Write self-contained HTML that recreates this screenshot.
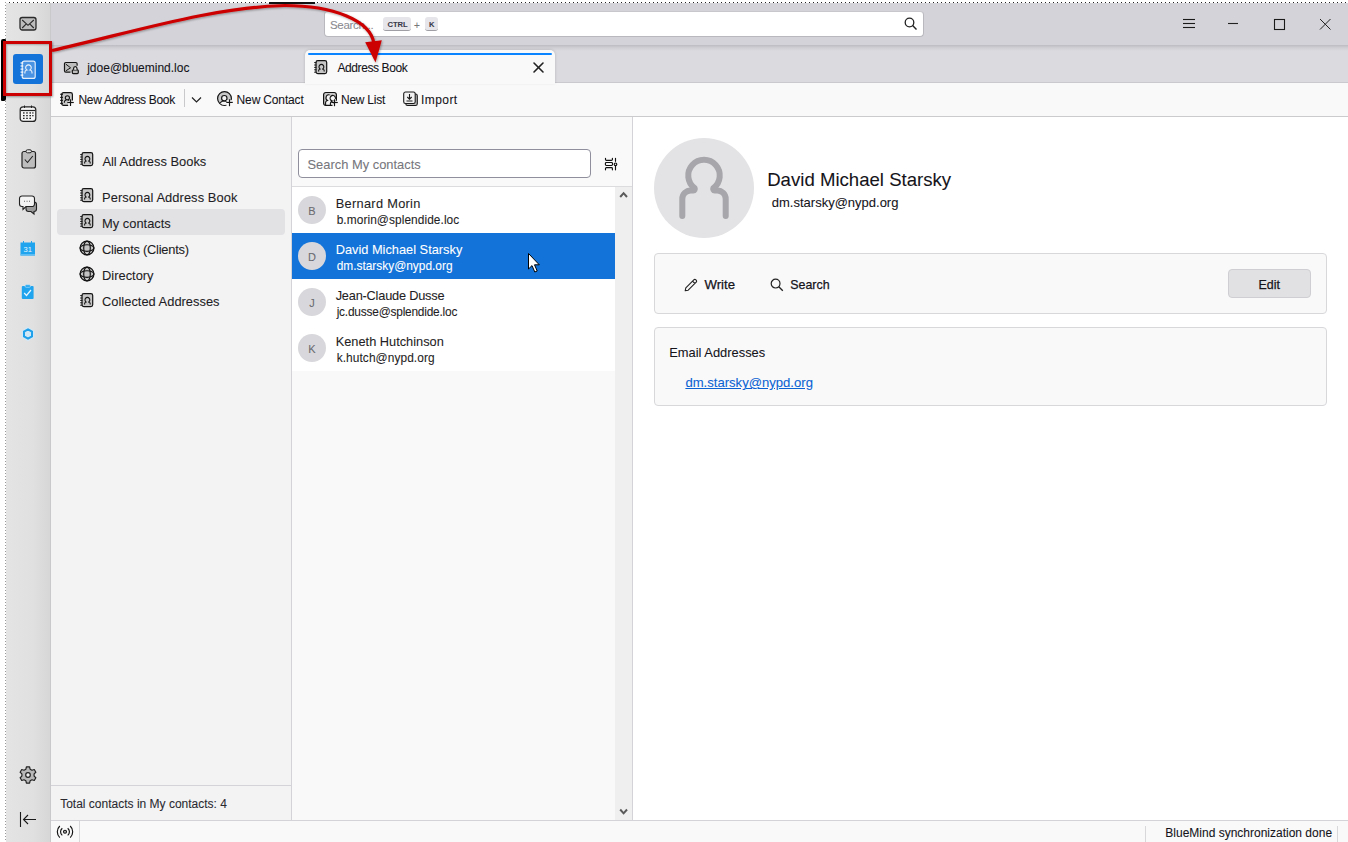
<!DOCTYPE html>
<html><head><meta charset="utf-8">
<style>
*{box-sizing:border-box;margin:0;padding:0}
html,body{width:1348px;height:842px;overflow:hidden;background:#fff;font-family:"Liberation Sans",sans-serif;color:#15141a}
.abs{position:absolute}
.t{position:absolute;white-space:nowrap;line-height:1;-webkit-text-stroke:0.08px currentColor}
svg{position:absolute;overflow:visible}
</style></head><body>
<svg width="0" height="0" style="position:absolute"><defs>
<symbol id="ab" viewBox="0 0 16 16"><rect x="3" y="0.7" width="10.7" height="12.9" rx="1.8" fill="#c6c6c6" stroke="#141414" stroke-width="1.2"/><g stroke="#141414" stroke-width="1"><line x1="1.2" y1="2.6" x2="3.4" y2="2.6"/><line x1="1.2" y1="5" x2="3.4" y2="5"/><line x1="1.2" y1="7.4" x2="3.4" y2="7.4"/><line x1="1.2" y1="9.8" x2="3.4" y2="9.8"/><line x1="1.2" y1="12.2" x2="3.4" y2="12.2"/></g><path d="M5.6,11.6 V10.7 a1.5,1.5 0 0 1 1.5,-1.5 h0.4 A2.4,2.5 0 1 1 9.3,9.2 h0.4 a1.5,1.5 0 0 1 1.5,1.5 V11.6" fill="none" stroke="#141414" stroke-width="1.1"/></symbol>
<symbol id="globe" viewBox="0 0 16 16"><circle cx="8" cy="8" r="6.9" fill="#c4c4c4" stroke="#141414" stroke-width="1.3"/><ellipse cx="8" cy="8" rx="3.3" ry="6.9" fill="none" stroke="#141414" stroke-width="1.15"/><ellipse cx="8" cy="8" rx="6.9" ry="3.3" fill="none" stroke="#141414" stroke-width="1.15"/></symbol>
</defs></svg>
<!-- dotted border -->
<div class="abs" style="left:5px;top:2px;width:1343px;height:1px;background:repeating-linear-gradient(90deg,#222 0 1px,transparent 1px 4px)"></div>
<div class="abs" style="left:5px;top:2px;width:1px;height:840px;background:repeating-linear-gradient(180deg,#9a9a9a 0 1px,transparent 1px 3px)"></div>

<!-- spaces sidebar -->
<div class="abs" style="left:6px;top:3px;width:45px;height:839px;background:linear-gradient(90deg,#e4e4e4 0%,#e0e0e0 60%,#d6d6d6 100%)"></div>
<div class="abs" style="left:50px;top:3px;width:1px;height:839px;background:#c9c9cc"></div>

<!-- title bar -->
<div class="abs" style="left:51px;top:3px;width:1297px;height:43px;background:#d4d3d9"></div>

<!-- search box -->
<div class="abs" style="left:324px;top:11px;width:600px;height:26px;background:#fff;border:1px solid #b9b8be;border-radius:4px;border-top-color:#c8c7cc"></div>
<div class="t" style="left:330px;top:20.00px;font-size:11.5px;color:#8b8a90;letter-spacing:-0.3px">Search...</div>
<div class="abs" style="left:383px;top:17px;width:28px;height:14px;background:#e6e6ea;border-radius:3px;border-bottom:1.5px solid #9e9ea4"></div>
<div class="t" style="left:387.5px;top:21.3px;font-size:7.6px;font-weight:bold;color:#3a3a4a">CTRL</div>
<div class="t" style="left:414px;top:20.70px;font-size:10px;color:#777">+</div>
<div class="abs" style="left:425px;top:17px;width:13px;height:14px;background:#e6e6ea;border-radius:3px;border-bottom:1.5px solid #9e9ea4"></div>
<div class="t" style="left:429px;top:21.3px;font-size:7.6px;font-weight:bold;color:#3a3a4a">K</div>
<svg width="14" height="14" style="left:904px;top:17px"><circle cx="5.5" cy="5.5" r="4.3" fill="none" stroke="#222" stroke-width="1.3"/><line x1="8.6" y1="8.6" x2="12.5" y2="12.5" stroke="#222" stroke-width="1.4"/></svg>
<!-- window controls -->
<svg width="14" height="12" style="left:1183px;top:18px"><g stroke="#1a1a1a" stroke-width="1.1"><line x1="0" y1="1.5" x2="12" y2="1.5"/><line x1="0" y1="5.5" x2="12" y2="5.5"/><line x1="0" y1="9.5" x2="12" y2="9.5"/></g></svg>
<svg width="12" height="4" style="left:1228px;top:22px"><line x1="0" y1="1.5" x2="10" y2="1.5" stroke="#222" stroke-width="1.1"/></svg>
<svg width="12" height="12" style="left:1274px;top:19px"><rect x="0.5" y="0.5" width="10" height="10" fill="none" stroke="#1a1a1a" stroke-width="1.1"/></svg>
<svg width="12" height="12" style="left:1319.5px;top:19px"><g stroke="#222" stroke-width="1"><line x1="0" y1="0" x2="10.5" y2="10.5"/><line x1="10.5" y1="0" x2="0" y2="10.5"/></g></svg>

<!-- tab strip -->
<div class="abs" style="left:51px;top:46px;width:1297px;height:36px;background:#dadadf"></div>
<div class="abs" style="left:51px;top:45px;width:1297px;height:6px;background:linear-gradient(180deg,#bdbcc2,#d0d0d5 50%,#dadadf)"></div>

<!-- toolbar -->
<div class="abs" style="left:51px;top:82px;width:1297px;height:34px;background:#f9f9f9;border-top:1px solid #c9c9ce"></div>
<div class="abs" style="left:51px;top:116px;width:1297px;height:1px;background:#cbcbcd"></div>

<!-- toolbar content -->
<svg width="16" height="16" style="left:60px;top:91px"><rect x="1.7" y="1.6" width="10.7" height="12.8" rx="1.8" fill="#c8c8c8"/><path d="M8.6,14.4 H3.5 a1.8,1.8 0 0 1 -1.8,-1.8 V3.4 a1.8,1.8 0 0 1 1.8,-1.8 H10.6 a1.8,1.8 0 0 1 1.8,1.8 V9.6" fill="none" stroke="#141414" stroke-width="1.2"/><rect x="8" y="10.3" width="6" height="4.5" fill="#f9f9f9" opacity="0.85"/><g stroke="#141414" stroke-width="1.15"><line x1="0.2" y1="3.3" x2="2.9" y2="3.3"/><line x1="0.2" y1="6.4" x2="2.9" y2="6.4"/><line x1="0.2" y1="9.4" x2="2.9" y2="9.4"/><line x1="0.2" y1="12.4" x2="2.9" y2="12.4"/></g><circle cx="7.4" cy="6.8" r="2.1" fill="none" stroke="#141414" stroke-width="1.1"/><path d="M4.4,11.8 V11 a1.8,1.8 0 0 1 1.8,-1.8 M8.6,9.2 V10" fill="none" stroke="#141414" stroke-width="1.1"/><g stroke="#141414" stroke-width="1.15"><line x1="7.3" y1="11.5" x2="13.8" y2="11.5"/><line x1="10.5" y1="8.3" x2="10.5" y2="15"/></g></svg>
<div class="t" style="left:78.5px;top:93.8px;font-size:12px;letter-spacing:-0.31px">New Address Book</div>
<div class="abs" style="left:184px;top:89px;width:1px;height:18px;background:#c9c9cc"></div>
<svg width="12" height="8" style="left:190.5px;top:95.5px"><path d="M1,1.5 L5.5,6 L10,1.5" fill="none" stroke="#222" stroke-width="1.2"/></svg>
<svg width="18" height="17" style="left:216px;top:90px"><defs><clipPath id="ncclip"><circle cx="8.5" cy="8.5" r="6.4"/></clipPath></defs><circle cx="8.5" cy="8.5" r="6.9" fill="#c8c8c8" stroke="#141414" stroke-width="1.2"/><g clip-path="url(#ncclip)"><ellipse cx="8.3" cy="15.6" rx="5.2" ry="4.6" fill="#f4f4f4" stroke="#141414" stroke-width="1.1"/></g><circle cx="8.3" cy="8.2" r="2.7" fill="#f4f4f4" stroke="#141414" stroke-width="1.15"/><path d="M10.5,10.2 H17.5 V17 H10.5 Z" fill="#f9f9f9"/><g stroke="#141414" stroke-width="1.15"><line x1="10.3" y1="12.4" x2="16.8" y2="12.4"/><line x1="13.5" y1="9.3" x2="13.5" y2="16.2"/></g></svg>
<div class="t" style="left:236.6px;top:93.8px;font-size:12px;letter-spacing:-0.15px">New Contact</div>
<svg width="17" height="17" style="left:322px;top:91px"><rect x="1.6" y="1.5" width="12.8" height="12.9" rx="2.2" fill="#c8c8c8"/><path d="M3.6,14.4 V11.6 a2,2 0 0 1 1.2,-1.8 L5.6,9.4 A2.4,2.7 0 1 1 8.2,9 L8.6,9.6 V14.4 Z" fill="#f6f6f6"/><path d="M8.4,14.4 V12.2 a2,2 0 0 1 1.2,-1.8 L10.4,10 A2.7,2.8 0 1 1 13,10 L13.6,10.4 V14.4 Z" fill="#f6f6f6"/><path d="M10.6,14.4 H3.8 a2.2,2.2 0 0 1 -2.2,-2.2 V3.7 a2.2,2.2 0 0 1 2.2,-2.2 H12.2 a2.2,2.2 0 0 1 2.2,2.2 V9.8" fill="none" stroke="#141414" stroke-width="1.2"/><path d="M3.6,14.2 V11.6 a2,2 0 0 1 1.2,-1.8 L5.6,9.4 A2.4,2.7 0 1 1 7.6,4" fill="none" stroke="#141414" stroke-width="1.1"/><path d="M8.4,14.2 V12.2 a2,2 0 0 1 1.2,-1.8 L10.4,10 A2.7,2.8 0 1 1 13.4,7.8" fill="none" stroke="#141414" stroke-width="1.1"/><path d="M10.8,10.6 H17 V17 H10.8 Z" fill="#f9f9f9"/><path d="M11.2,11.8 H12.6" stroke="#141414" stroke-width="1"/><g stroke="#141414" stroke-width="1.15"><line x1="9.3" y1="11.5" x2="15.8" y2="11.5"/><line x1="12.5" y1="8.3" x2="12.5" y2="15.2"/></g></svg>
<div class="t" style="left:341px;top:93.8px;font-size:12px;letter-spacing:-0.25px">New List</div>
<svg width="16" height="16" style="left:403px;top:91px"><rect x="2.8" y="3" width="11.5" height="11.5" rx="1.8" fill="#bdbdbd" stroke="#1a1a1a" stroke-width="1.1"/><rect x="0.7" y="1" width="11.5" height="11.5" rx="1.8" fill="#f2f2f2" stroke="#1a1a1a" stroke-width="1.1"/><path d="M6.5,3 V8 M4.3,6 L6.5,8.2 L8.7,6 M3.5,10 H9.5" fill="none" stroke="#1a1a1a" stroke-width="1.1"/></svg>
<div class="t" style="left:421px;top:93.8px;font-size:12px;letter-spacing:0.43px">Import</div>

<!-- tab 1 -->
<svg width="18" height="14" style="left:63px;top:61px"><g transform="translate(0.3,0.4)"><path d="M1.5,1.5 H13.2 V5.5 L9,8 V10.4 H1.5 Z" fill="#bdbdbd"/><g fill="none" stroke="#161616" stroke-width="1.2"><path d="M7.2,10.7 H2.5 a1.3,1.3 0 0 1 -1.3,-1.3 V2.4 a1.3,1.3 0 0 1 1.3,-1.3 H12.5 a1.3,1.3 0 0 1 1.3,1.3 V4.3"/><path d="M2.6,2.8 L7.3,6.4 L2.6,9.4" stroke-width="1"/></g><rect x="9" y="8.4" width="6" height="3.8" rx="1" fill="#bdbdbd" stroke="#161616" stroke-width="1.2"/><path d="M10.3,8.4 V7.1 a1.7,1.9 0 0 1 3.4,0 V8.4" fill="#e8e8e8" stroke="#161616" stroke-width="1.2"/></g></svg>
<div class="t" style="left:87.2px;top:61.8px;font-size:12px;color:#15141a">jdoe@bluemind.loc</div>
<!-- tab 2 active -->
<div class="abs" style="left:305px;top:50px;width:250px;height:33px;background:#f9f9f9;border-radius:5px 5px 0 0;box-shadow:0 0 3px rgba(0,0,0,0.18)"></div>
<div class="abs" style="left:305px;top:78px;width:250px;height:6px;background:#f9f9f9"></div>
<div class="abs" style="left:308px;top:53px;width:244px;height:2px;background:#0b84ff;border-radius:1px"></div>
<svg width="16" height="16" style="left:312.5px;top:60px"><use href="#ab"/></svg>
<div class="t" style="left:337.5px;top:61.8px;font-size:12px;letter-spacing:-0.41px;color:#15141a">Address Book</div>
<svg width="12" height="12" style="left:532.5px;top:61.5px"><g stroke="#222" stroke-width="1.6" stroke-linecap="round"><line x1="1" y1="1" x2="10" y2="10"/><line x1="10" y1="1" x2="1" y2="10"/></g></svg>


<!-- books pane -->
<div class="abs" style="left:51px;top:117px;width:240px;height:703px;background:#f3f3f4"></div>
<div class="abs" style="left:291px;top:117px;width:1px;height:703px;background:#d4d4d8"></div>
<div class="abs" style="left:51px;top:785px;width:240px;height:1px;background:#d4d4d8"></div>


<!-- books content -->
<div class="abs" style="left:57px;top:209px;width:228px;height:26px;background:#e2e2e5;border-radius:4px"></div>
<svg width="16" height="16" style="left:78.5px;top:152.3px"><use href="#ab"/></svg>
<div class="t" style="left:102.4px;top:156.1px;font-size:12.9px;color:#1f1e25">All Address Books</div>
<svg width="16" height="16" style="left:78.5px;top:188.3px"><use href="#ab"/></svg>
<div class="t" style="left:102px;top:192.1px;font-size:12.9px;color:#1f1e25;letter-spacing:0.07px">Personal Address Book</div>
<svg width="16" height="16" style="left:78.5px;top:214.3px"><use href="#ab"/></svg>
<div class="t" style="left:102px;top:217.8px;font-size:12.9px;color:#1f1e25">My contacts</div>
<svg width="16" height="16" style="left:78.5px;top:239.5px"><use href="#globe"/></svg>
<div class="t" style="left:102px;top:243.9px;font-size:12.9px;color:#1f1e25;letter-spacing:-0.25px">Clients (Clients)</div>
<svg width="16" height="16" style="left:78.5px;top:265.5px"><use href="#globe"/></svg>
<div class="t" style="left:102px;top:270.1px;font-size:12.9px;color:#1f1e25">Directory</div>
<svg width="16" height="16" style="left:78.5px;top:292.5px"><use href="#ab"/></svg>
<div class="t" style="left:102px;top:295.8px;font-size:12.9px;color:#1f1e25">Collected Addresses</div>
<div class="t" style="left:60.2px;top:798.20px;font-size:12px;color:#2a2a30">Total contacts in My contacts: 4</div>

<!-- list pane -->
<div class="abs" style="left:292px;top:117px;width:340px;height:69px;background:#f9f9fa"></div>
<div class="abs" style="left:292px;top:186px;width:340px;height:1px;background:#dcdcdf"></div>
<div class="abs" style="left:292px;top:187px;width:323px;height:633px;background:#f9f9f9"></div>
<div class="abs" style="left:292px;top:187px;width:323px;height:184px;background:#fff"></div>
<div class="abs" style="left:615px;top:187px;width:17px;height:633px;background:#efefef"></div>
<div class="abs" style="left:632px;top:117px;width:1px;height:703px;background:#d4d4d8"></div>


<!-- list content -->
<div class="abs" style="left:298px;top:149px;width:293px;height:29px;background:#fff;border:1px solid #8f8f9d;border-radius:4px"></div>
<div class="t" style="left:307.5px;top:159.2px;font-size:12.9px;color:#76767c">Search My contacts</div>
<svg width="14" height="14" style="left:604px;top:157px"><g stroke="#111" stroke-width="1.15" fill="none" stroke-linecap="round"><path d="M1.5,1.2 V2.5 a0.9,0.9 0 0 0 0.9,0.9 H7.5 a0.9,0.9 0 0 0 0.9,-0.9 V1.2"/><rect x="1.4" y="5.5" width="7.1" height="3" rx="0.9"/><path d="M1.5,12.8 V11.5 a0.9,0.9 0 0 1 0.9,-0.9 H7.5 a0.9,0.9 0 0 1 0.9,0.9 V12.8"/><path d="M11.5,1.2 V4.3 M11.5,8.8 V12.8"/><circle cx="11.5" cy="7.3" r="1.3"/></g></svg>
<div class="abs" style="left:292px;top:233px;width:323px;height:46px;background:#1373d9"></div>
<div class="abs" style="left:298px;top:196px;width:28px;height:28px;border-radius:50%;background:#d8d8dc"></div>
<div class="t" style="left:298px;width:28px;text-align:center;top:205.5px;font-size:11px;color:#6a6a70">B</div>
<div class="t" style="left:335.7px;top:198.0px;font-size:12.8px;color:#1f1e25;letter-spacing:0.3px">Bernard Morin</div>
<div class="t" style="left:336.7px;top:215.40px;font-size:11.9px;color:#1f1e25;letter-spacing:0.07px">b.morin@splendide.loc</div>
<div class="abs" style="left:298px;top:242px;width:28px;height:28px;border-radius:50%;background:#d8d8dc"></div>
<div class="t" style="left:298px;width:28px;text-align:center;top:251.5px;font-size:11px;color:#6a6a70">D</div>
<div class="t" style="left:335.7px;top:244.0px;font-size:12.8px;color:#fff">David Michael Starsky</div>
<div class="t" style="left:336.7px;top:261.40px;font-size:11.9px;color:#fff">dm.starsky@nypd.org</div>
<div class="abs" style="left:298px;top:288px;width:28px;height:28px;border-radius:50%;background:#d8d8dc"></div>
<div class="t" style="left:298px;width:28px;text-align:center;top:297.5px;font-size:11px;color:#6a6a70">J</div>
<div class="t" style="left:335.7px;top:290.0px;font-size:12.8px;color:#1f1e25;letter-spacing:-0.22px">Jean-Claude Dusse</div>
<div class="t" style="left:336.7px;top:307.40px;font-size:11.9px;color:#1f1e25;letter-spacing:-0.21px">jc.dusse@splendide.loc</div>
<div class="abs" style="left:298px;top:334px;width:28px;height:28px;border-radius:50%;background:#d8d8dc"></div>
<div class="t" style="left:298px;width:28px;text-align:center;top:343.5px;font-size:11px;color:#6a6a70">K</div>
<div class="t" style="left:335.7px;top:336.0px;font-size:12.8px;color:#1f1e25">Keneth Hutchinson</div>
<div class="t" style="left:336.7px;top:353.10px;font-size:11.9px;color:#1f1e25;letter-spacing:0.08px">k.hutch@nypd.org</div>
<svg width="10" height="8" style="left:619px;top:191px"><path d="M1.2,6 L4.6,2.2 L8,6" fill="none" stroke="#5a5a5a" stroke-width="2"/></svg>
<svg width="10" height="8" style="left:619px;top:808px"><path d="M1.2,1.5 L4.6,5.3 L8,1.5" fill="none" stroke="#5a5a5a" stroke-width="2"/></svg>
<svg width="16" height="22" style="left:528px;top:253px"><path d="M0.5,0.5 V16 L4,12.6 L6.8,19 L9.2,18 L6.5,11.8 H11.3 Z" fill="#fff" stroke="#000" stroke-width="1"/></svg>

<!-- detail pane -->
<div class="abs" style="left:633px;top:117px;width:715px;height:703px;background:#fff"></div>


<!-- detail content -->
<div class="abs" style="left:654px;top:138px;width:100px;height:100px;border-radius:50%;background:#e3e3e5"></div>
<svg width="100" height="100" style="left:654px;top:138px"><path d="M28.3,78 V61 a8.5,8.5 0 0 1 8.5,-8.5 H39.3 a1.6,1.6 0 0 0 1.4,-2.3 A15.75,15.75 0 1 1 59.3,50.2 a1.6,1.6 0 0 0 1.4,2.3 H63.2 a8.5,8.5 0 0 1 8.5,8.5 V78" fill="none" stroke="#a6a6ab" stroke-width="6" stroke-linecap="round" stroke-linejoin="round"/></svg>
<div class="t" style="left:767.2px;top:170.5px;font-size:18.6px;color:#15141a">David Michael Starsky</div>
<div class="t" style="left:771.8px;top:195.6px;font-size:13px;color:#15141a">dm.starsky@nypd.org</div>

<div class="abs" style="left:654px;top:253px;width:673px;height:61px;background:#f9f9fa;border:1px solid #d8d8db;border-radius:4px"></div>
<svg width="14" height="14" style="left:684px;top:277.5px"><path d="M1.2,12.8 L1.8,9.8 L9.8,1.8 a1.4,1.4 0 0 1 2,0 L12.2,2.2 a1.4,1.4 0 0 1 0,2 L4.2,12.2 Z M8.5,3.1 L10.9,5.5" fill="none" stroke="#222" stroke-width="1.1" stroke-linejoin="round"/></svg>
<div class="t" style="left:704.5px;top:278.4px;font-size:13.2px;-webkit-text-stroke:0.25px #15141a;letter-spacing:0px;color:#15141a">Write</div>
<svg width="14" height="14" style="left:770px;top:277.5px"><circle cx="5.6" cy="5.6" r="4.4" fill="none" stroke="#222" stroke-width="1.2"/><line x1="8.8" y1="8.8" x2="12.8" y2="12.8" stroke="#222" stroke-width="1.3"/></svg>
<div class="t" style="left:790.3px;top:279.20px;font-size:12.4px;-webkit-text-stroke:0.25px #15141a;letter-spacing:0px;color:#15141a">Search</div>
<div class="abs" style="left:1228px;top:269px;width:83px;height:29px;background:#e1e1e3;border:1px solid #cfcfd3;border-radius:4px"></div>
<div class="t" style="left:1258.6px;top:278.70px;font-size:12.4px;-webkit-text-stroke:0.25px #15141a;letter-spacing:0px;color:#15141a">Edit</div>

<div class="abs" style="left:654px;top:327px;width:673px;height:79px;background:#f9f9fa;border:1px solid #d8d8db;border-radius:4px"></div>
<div class="t" style="left:669.2px;top:346.90px;font-size:12.9px;color:#15141a">Email Addresses</div>
<div class="t" style="left:685.4px;top:376.2px;font-size:13.1px;color:#0b63d3;text-decoration:underline">dm.starsky@nypd.org</div>

<!-- status bar -->
<div class="abs" style="left:51px;top:820px;width:1297px;height:22px;background:#f9f9f9;border-top:1px solid #d4d4d8"></div>

<svg width="19" height="14" style="left:56px;top:825px"><g fill="none" stroke="#111" stroke-width="1.15"><path d="M3.8,1 a8,8 0 0 0 0,11.6"/><path d="M14.2,1 a8,8 0 0 1 0,11.6"/><path d="M6.3,3.2 a4.6,4.6 0 0 0 0,7.2"/><path d="M11.7,3.2 a4.6,4.6 0 0 1 0,7.2"/></g><circle cx="9" cy="6.8" r="1.5" fill="#bbb" stroke="#111" stroke-width="1.1"/></svg>
<div class="abs" style="left:79px;top:821px;width:1px;height:21px;background:#d8d8db"></div>
<div class="abs" style="left:1145px;top:826px;width:1px;height:16px;background:#d8d8db"></div>
<div class="abs" style="left:1337px;top:826px;width:1px;height:16px;background:#d8d8db"></div>
<div class="t" style="left:1165.3px;top:826.7px;font-size:12px;color:#15141a">BlueMind synchronization done</div>

<!-- sidebar icons -->
<svg width="18" height="16" style="left:19px;top:16px"><rect x="1" y="1.5" width="16" height="12.5" rx="2.2" fill="#bdbdbd" stroke="#2a2a2a" stroke-width="1.3"/><path d="M3.2,4 L9,9.3 L14.8,4 M3.2,12 L7.3,7.8 M14.8,12 L10.7,7.8" fill="none" stroke="#2a2a2a" stroke-width="1.1"/></svg>
<div class="abs" style="left:13px;top:54px;width:30px;height:30px;background:#1373d9;border-radius:3px"></div>
<svg width="17" height="20" style="left:19.5px;top:59.5px"><rect x="2.2" y="1.1" width="13" height="17.3" rx="2" fill="#4a93e2" stroke="#e6f0fb" stroke-width="1.15"/><g stroke="#fff" stroke-width="1.1"><line x1="0.5" y1="3" x2="3.3" y2="3"/><line x1="0.5" y1="6" x2="3.3" y2="6"/><line x1="0.5" y1="9.1" x2="3.3" y2="9.1"/><line x1="0.5" y1="12.1" x2="3.3" y2="12.1"/><line x1="0.5" y1="15.1" x2="3.3" y2="15.1"/></g><path d="M4.9,13.6 V12.3 a2.3,2.3 0 0 1 2,-2.3 A2.8,2.8 0 1 1 10,10 a2.3,2.3 0 0 1 2,2.3 V13.6" fill="none" stroke="#eef5fd" stroke-width="1.1"/></svg>
<svg width="18" height="18" style="left:19px;top:105px"><rect x="1.2" y="1.8" width="15.6" height="14.6" rx="3" fill="#f4f4f4" stroke="#222" stroke-width="1.2"/><path d="M1.8,5.5 H16.2" stroke="#222" stroke-width="1.2"/><path d="M5.5,0.5 V3 M12.5,0.5 V3" stroke="#222" stroke-width="1"/><g fill="#222"><rect x="4" y="7.3" width="1.6" height="1.3"/><rect x="7.2" y="7.3" width="1.6" height="1.3"/><rect x="10.4" y="7.3" width="1.6" height="1.3"/><rect x="4" y="10" width="1.6" height="1.3"/><rect x="7.2" y="10" width="1.6" height="1.3"/><rect x="10.4" y="10" width="1.6" height="1.3"/><rect x="4" y="12.7" width="1.6" height="1.3"/><rect x="7.2" y="12.7" width="1.6" height="1.3"/><rect x="10.4" y="12.7" width="1.6" height="1.3"/><rect x="13.2" y="7.3" width="1.3" height="1.3"/><rect x="13.2" y="10" width="1.3" height="1.3"/></g></svg>
<svg width="16" height="20" style="left:20.5px;top:149px"><rect x="1" y="2.5" width="13.5" height="16.5" rx="2" fill="#bdbdbd" stroke="#222" stroke-width="1.2"/><rect x="5" y="0.8" width="5.5" height="3" rx="1.5" fill="#e8e8e8" stroke="#222" stroke-width="1"/><path d="M3.8,10.5 L6.5,13.5 L11.8,7" fill="none" stroke="#222" stroke-width="1.1"/></svg>
<svg width="20" height="20" style="left:18.5px;top:194.5px"><path d="M7,11 V14 a2.5,2.5 0 0 0 2.5,2.5 H12 L15,19 V16.5 a2.5,2.5 0 0 0 2.5,-2.5 V9.5 a2.5,2.5 0 0 0 -2.5,-2.5" fill="#9a9a9a" stroke="#222" stroke-width="1.1"/><path d="M3,1 H13 a2.5,2.5 0 0 1 2.5,2.5 V9 a2.5,2.5 0 0 1 -2.5,2.5 H7 L4,14.5 V11.5 H3 a2.5,2.5 0 0 1 -2.5,-2.5 V3.5 A2.5,2.5 0 0 1 3,1 Z" fill="#f4f4f4" stroke="#222" stroke-width="1.1"/><path d="M5.2,6.2 H5.9 M7.7,6.2 H8.4 M10.2,6.2 H10.9" stroke="#222" stroke-width="1.1"/></svg>
<svg width="16" height="16" style="left:19.5px;top:240.5px"><rect x="0.5" y="1.5" width="14.5" height="13" fill="#20a4ee"/><rect x="0.5" y="13" width="14.5" height="1.5" fill="#5bbdf3"/><text x="7.7" y="11.2" font-family="Liberation Sans" font-size="7.5" fill="#e8f6ff" text-anchor="middle">31</text><rect x="3" y="0" width="1" height="2" fill="#20a4ee"/><rect x="11" y="0" width="1" height="2" fill="#20a4ee"/></svg>
<svg width="14" height="16" style="left:20.5px;top:283.5px"><rect x="0.8" y="2" width="11.8" height="13" rx="1" fill="#20a4ee"/><rect x="4" y="0.8" width="5.5" height="2.5" rx="1.2" fill="#20a4ee" stroke="#c8e8fb" stroke-width="0.6"/><path d="M3.2,9 L5.5,11.5 L10,6" fill="none" stroke="#e8f6ff" stroke-width="1.2"/></svg>
<svg width="16" height="16" style="left:19.5px;top:326px"><path d="M8,0.8 L14.3,4.4 V11.6 L8,15.2 L1.7,11.6 V4.4 Z" fill="#cde9fa" opacity="0.8"/><path d="M8,3.4 L12,5.7 V10.3 L8,12.6 L4,10.3 V5.7 Z" fill="none" stroke="#1ea0ea" stroke-width="2"/></svg>
<svg width="18" height="18" style="left:18.8px;top:766px"><path d="M6.88,3.17 L7.42,0.85 L10.58,0.85 L11.12,3.17 L12.99,4.25 L15.26,3.55 L16.85,6.30 L15.11,7.92 L15.11,10.08 L16.85,11.70 L15.26,14.45 L12.99,13.75 L11.12,14.83 L10.58,17.15 L7.42,17.15 L6.88,14.83 L5.01,13.75 L2.74,14.45 L1.15,11.70 L2.89,10.08 L2.89,7.92 L1.15,6.30 L2.74,3.55 L5.01,4.25 Z" fill="#b8b8b8" stroke="#222" stroke-width="1.2" stroke-linejoin="round"/><circle cx="9" cy="9" r="2.3" fill="#f0f0f0" stroke="#222" stroke-width="1.2"/></svg>
<svg width="18" height="16" style="left:20px;top:811px"><path d="M0.5,1 V16 M3.5,8.5 H16 M8,4 L3.5,8.5 L8,13" fill="none" stroke="#1a1a1a" stroke-width="1.1"/></svg>

<!-- annotations -->
<div class="abs" style="left:1px;top:39px;width:4.5px;height:62px;background:#000;border-radius:2px 1px 2px 1px"></div>
<div class="abs" style="left:3px;top:41px;width:49px;height:55px;border:3px solid #cc0000;box-shadow:1px 1px 2px rgba(0,0,0,0.35), inset 1px 1px 2px rgba(0,0,0,0.25)"></div>
<div class="abs" style="left:269px;top:1.5px;width:46px;height:2px;background:#111"></div>
<svg width="400" height="80" style="left:0;top:0" viewBox="0 0 400 80"><defs><filter id="sh" x="-10%" y="-10%" width="120%" height="130%"><feDropShadow dx="0.8" dy="1" stdDeviation="0.8" flood-color="#000" flood-opacity="0.35"/></filter></defs><g filter="url(#sh)"><path d="M52,50.5 C130,33 212,7 285,5.5 C332,5.5 371,20 374,44" fill="none" stroke="#cc0000" stroke-width="3.2"/><path d="M365.2,42.3 L381.8,40.3 L375.5,62.5 Z" fill="#cc0000"/></g></svg>
</body></html>
